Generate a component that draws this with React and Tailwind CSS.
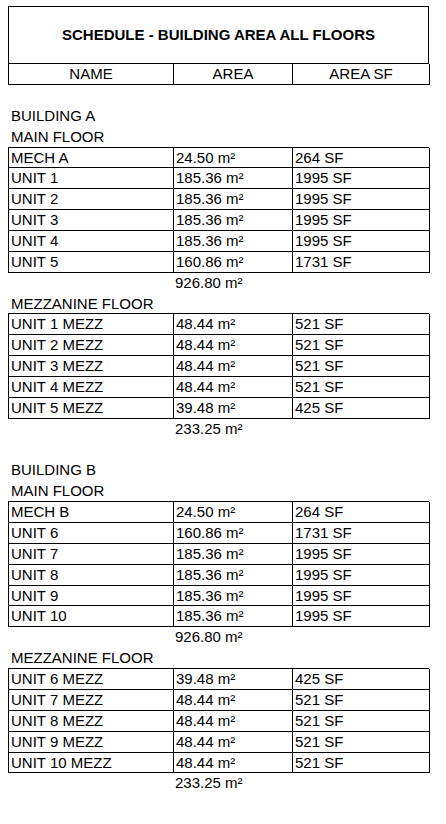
import React from "react";

const buildings = [
  {
    name: "BUILDING A",
    main: [
      ["MECH A", "24.50 m²", "264 SF"],
      ["UNIT 1", "185.36 m²", "1995 SF"],
      ["UNIT 2", "185.36 m²", "1995 SF"],
      ["UNIT 3", "185.36 m²", "1995 SF"],
      ["UNIT 4", "185.36 m²", "1995 SF"],
      ["UNIT 5", "160.86 m²", "1731 SF"],
    ],
    mainTotal: "926.80 m²",
    mezz: [
      ["UNIT 1 MEZZ", "48.44 m²", "521 SF"],
      ["UNIT 2 MEZZ", "48.44 m²", "521 SF"],
      ["UNIT 3 MEZZ", "48.44 m²", "521 SF"],
      ["UNIT 4 MEZZ", "48.44 m²", "521 SF"],
      ["UNIT 5 MEZZ", "39.48 m²", "425 SF"],
    ],
    mezzTotal: "233.25 m²",
  },
  {
    name: "BUILDING B",
    main: [
      ["MECH B", "24.50 m²", "264 SF"],
      ["UNIT 6", "160.86 m²", "1731 SF"],
      ["UNIT 7", "185.36 m²", "1995 SF"],
      ["UNIT 8", "185.36 m²", "1995 SF"],
      ["UNIT 9", "185.36 m²", "1995 SF"],
      ["UNIT 10", "185.36 m²", "1995 SF"],
    ],
    mainTotal: "926.80 m²",
    mezz: [
      ["UNIT 6 MEZZ", "39.48 m²", "425 SF"],
      ["UNIT 7 MEZZ", "48.44 m²", "521 SF"],
      ["UNIT 8 MEZZ", "48.44 m²", "521 SF"],
      ["UNIT 9 MEZZ", "48.44 m²", "521 SF"],
      ["UNIT 10 MEZZ", "48.44 m²", "521 SF"],
    ],
    mezzTotal: "233.25 m²",
  },
];

function Line({ children }) {
  return (
    <div className="h-[20.87px] leading-[20.87px] pl-[3px] whitespace-nowrap">
      {children}
    </div>
  );
}

function Table({ rows }) {
  return (
    <div className="-mt-px border-t border-l border-black">
      {rows.map((r, i) => (
        <div
          key={i}
          className="grid grid-cols-[165px_119px_137px] h-[20.87px] leading-[19.87px]"
        >
          {r.map((c, j) => (
            <div
              key={j}
              className="border-r border-b border-black pl-[2px] whitespace-nowrap overflow-hidden"
            >
              {c}
            </div>
          ))}
        </div>
      ))}
    </div>
  );
}

function Total({ children }) {
  return (
    <div className="h-[20.87px] leading-[20.87px] pl-[167px] whitespace-nowrap">
      {children}
    </div>
  );
}

export default function App() {
  return (
    <div
      className="min-h-[824px] bg-white text-black text-[15px] pt-[6px]"
      style={{ fontFamily: '"Liberation Sans", Arial, sans-serif' }}
    >
      <div className="ml-[8px] w-[421px]">
        <div className="h-[58px] border border-black flex items-center justify-center font-bold text-[15px]">
          SCHEDULE - BUILDING AREA ALL FLOORS
        </div>
        <div className="grid grid-cols-[165px_119px_137px] h-[21px] border-l border-black leading-[20px]">
          <div className="border-r border-b border-black text-center">NAME</div>
          <div className="border-r border-b border-black text-center">AREA</div>
          <div className="border-r border-b border-black text-center">AREA SF</div>
        </div>
        {buildings.map((b, i) => (
          <div key={i}>
            <div className="h-[20.87px]" />
            <Line>{b.name}</Line>
            <Line>MAIN FLOOR</Line>
            <Table rows={b.main} />
            <Total>{b.mainTotal}</Total>
            <Line>MEZZANINE FLOOR</Line>
            <Table rows={b.mezz} />
            <Total>{b.mezzTotal}</Total>
          </div>
        ))}
      </div>
    </div>
  );
}
